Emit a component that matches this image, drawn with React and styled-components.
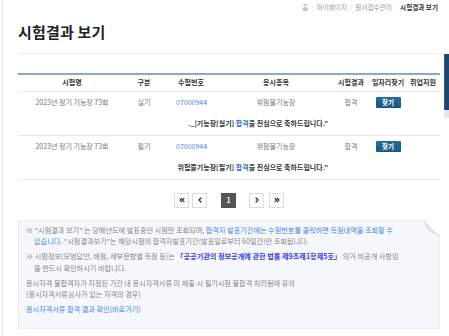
import React from "react";
import styled, { createGlobalStyle } from "styled-components";
import { ChevronsLeft, ChevronLeft, ChevronRight, ChevronsRight } from "lucide-react";

const Global = createGlobalStyle`
  html, body { margin: 0; padding: 0; background: #fff; }
  body {
    width: 449px; height: 336px; overflow: hidden;
    font-family: "Noto Sans CJK KR", "Noto Sans", sans-serif;
    color: #666;
  }
  * { box-sizing: border-box; }
`;

const Page = styled.div`
  position: relative;
  margin-left: 2px;
  border-left: 1px solid #e6e6e6;
  min-height: 336px;
  padding: 0 9px 0 15px;
`;

const Crumbs = styled.nav`
  display: flex;
  justify-content: flex-end;
  align-items: center;
  gap: 3.5px;
  padding: 3px 2px 0 0;
  height: 11px;
  font-size: 6.6px;
  line-height: 8px;
  color: #999;
`;

const Crumb = styled.span`
  color: ${(p) => (p.$current ? "#333" : "#999")};
  font-weight: ${(p) => (p.$current ? 700 : 400)};
`;

const Sep = styled.span`
  color: #ccc;
  font-size: 5px;
`;

const Title = styled.h1`
  margin: 12px 0 0;
  padding-bottom: 12px;
  margin-right: -1px;
  border-bottom: 1px solid #eee;
  font-size: 15px;
  line-height: 18px;
  font-weight: 700;
  color: #222;
  letter-spacing: 0.2px;
`;

const Table = styled.table`
  width: 100%;
  margin-top: 19px;
  border-collapse: collapse;
  table-layout: fixed;
  border-top: 2px solid #86aad8;
  font-size: 7px;
`;

const Th = styled.th`
  height: 17px;
  padding: 0;
  font-weight: 700;
  color: #333;
  text-align: center;
  white-space: nowrap;
  border-bottom: 1px solid #e8e8e8;
  line-height: 9px;
`;

const Td = styled.td`
  height: 22px;
  padding: 0;
  text-align: ${(p) => p.$align || "center"};
  color: #777;
  white-space: nowrap;
  line-height: 9px;
`;

const NumLink = styled.a`
  color: #4a82e6;
  text-decoration: none;
`;

const FindButton = styled.button`
  width: 25px;
  height: 11px;
  padding: 0;
  border: none;
  border-radius: 1px;
  background: linear-gradient(#2a6c98, #1b5680);
  color: #fff;
  font-family: inherit;
  font-size: 6.5px;
  font-weight: 700;
  line-height: 11px;
  vertical-align: middle;
`;

const Congrats = styled.td`
  height: 22px;
  padding: 0 112px 0 0;
  text-align: right;
  white-space: nowrap;
  font-weight: 700;
  color: #333;
  line-height: 9px;
  border-bottom: 1px solid #e8e8e8;
`;

const Pass = styled.span`
  color: #2f6fd8;
`;

const Pager = styled.div`
  display: flex;
  justify-content: center;
  align-items: center;
  margin-top: 13px;
  height: 15px;
`;

const PageBtn = styled.span`
  display: flex;
  align-items: center;
  justify-content: center;
  width: 15px;
  height: 15px;
  margin-left: ${(p) => p.$gap || 0}px;
  border: 1px solid ${(p) => (p.$active ? "#555" : "#ddd")};
  background: ${(p) => (p.$active ? "#555" : "#fff")};
  color: ${(p) => (p.$active ? "#fff" : "#222")};
  font-size: 7px;
  font-weight: 700;
`;

const Notice = styled.div`
  position: relative;
  margin-top: 12px;
  height: 109px;
  padding: 4px 7px 0 7px;
  background: #f5f7fb;
  border: 1px solid #e9ecf2;
  font-size: 7.15px;
  line-height: 11.5px;
  color: #888;
`;

const Para = styled.p`
  margin: 0 0 3.5px;
  padding-left: ${(p) => (p.$hang ? "8px" : "0")};
  text-indent: ${(p) => (p.$hang ? "-8px" : "0")};
  white-space: nowrap;
`;

const Blue = styled.span`
  color: #4a86e8;
`;

const Law = styled.span`
  color: #3b3fe8;
  font-weight: 700;
`;

const Fold = styled.svg`
  position: absolute;
  top: -1px;
  right: -1px;
`;

const QuickMenu = styled.div`
  position: absolute;
  left: 441px;
  top: 54px;
  width: 10px;
  height: 56px;
  background: #1c4670;
  border-left: 1px solid #2b5f90;
  &::after {
    content: "";
    position: absolute;
    left: -1px;
    top: 56px;
    width: 10px;
    height: 8px;
    background: #e4e6ea;
  }
`;

const rows = [
  { kind: "실기", congrats: <>._|기능장[실기] <Pass>합격</Pass>을 진심으로 축하드립니다.”</> },
  { kind: "필기", congrats: <>위험물기능장[필기] <Pass>합격</Pass>을 진심으로 축하드립니다.”</> },
];

export default function App() {
  return (
    <>
      <Global />
      <Page>
        <Crumbs>
          <Crumb>홈</Crumb>
          <Sep>|</Sep>
          <Crumb>마이페이지</Crumb>
          <Sep>|</Sep>
          <Crumb>원서접수관리</Crumb>
          <Sep>|</Sep>
          <Crumb $current>시험결과 보기</Crumb>
        </Crumbs>
        <Title>시험결과 보기</Title>
        <Table>
          <colgroup>
            <col style={{ width: 108 }} />
            <col style={{ width: 36 }} />
            <col style={{ width: 58 }} />
            <col style={{ width: 112 }} />
            <col style={{ width: 38 }} />
            <col style={{ width: 36 }} />
            <col style={{ width: 34 }} />
          </colgroup>
          <thead>
            <tr>
              <Th>시험명</Th>
              <Th>구분</Th>
              <Th>수험번호</Th>
              <Th>응시종목</Th>
              <Th>시험결과</Th>
              <Th>일자리찾기</Th>
              <Th>취업지원</Th>
            </tr>
          </thead>
          <tbody>
            {rows.map((r, i) => (
              <React.Fragment key={i}>
                <tr>
                  <Td>2023년 정기 기능장 73회</Td>
                  <Td>{r.kind}</Td>
                  <Td $align="left" style={{ paddingLeft: 14 }}>
                    <NumLink href="#">07000944</NumLink>
                  </Td>
                  <Td>위험물기능장</Td>
                  <Td>합격</Td>
                  <Td>
                    <FindButton>찾기</FindButton>
                  </Td>
                  <Td></Td>
                </tr>
                <tr>
                  <Congrats colSpan={7}>{r.congrats}</Congrats>
                </tr>
              </React.Fragment>
            ))}
          </tbody>
        </Table>
        <Pager>
          <PageBtn><ChevronsLeft size={8} strokeWidth={3.5} /></PageBtn>
          <PageBtn $gap={3}><ChevronLeft size={8} strokeWidth={3.5} /></PageBtn>
          <PageBtn $gap={14} $active>1</PageBtn>
          <PageBtn $gap={13}><ChevronRight size={8} strokeWidth={3.5} /></PageBtn>
          <PageBtn $gap={5}><ChevronsRight size={8} strokeWidth={3.5} /></PageBtn>
        </Pager>
        <Notice>
          <Fold width="16" height="16" viewBox="0 0 16 16">
            <polygon points="0,0 16,0 16,16" fill="#fff" />
            <path d="M0,0 C1,6 2,12 16,16 C10,12 6,8 0,0 Z" fill="#dfe2e8" />
            <path d="M0,0 C4,6 8,12 16,16" stroke="#cfd3da" strokeWidth="0.6" fill="none" />
          </Fold>
          <Para $hang>
            ※ "시험결과 보기" 는 당해년도에 발표중인 시험만 조회되며, <Blue>합격자 발표기간에는 수험번호를 클릭하면 득점내역을 조회할 수</Blue>
            <br />
            <Blue>있습니다.</Blue> "시험결과보기"는 해당시험의 합격자발표기간(발표일로부터 60일간)만 조회됩니다.
          </Para>
          <Para $hang>
            ※ 시험정보(모범답안, 배점, 세부문항별 득점 등)는 <Law>「공공기관의 정보공개에 관한 법률 제9조제1항제5호」</Law> 의거 비공개 사항임
            <br />
            을 반드시 확인하시기 바랍니다.
          </Para>
          <Para>
            응시자격 불합격자가 지정된 기간 내 응시자격서류 미 제출 시 필기시험 불합격 처리됨에 유의
            <br />
            (응시자격서류심사가 있는 자격의 경우)
          </Para>
          <Para>
            <Blue>응시자격서류 합격 결과 확인(바로가기)</Blue>
          </Para>
        </Notice>
        <QuickMenu />
      </Page>
    </>
  );
}
